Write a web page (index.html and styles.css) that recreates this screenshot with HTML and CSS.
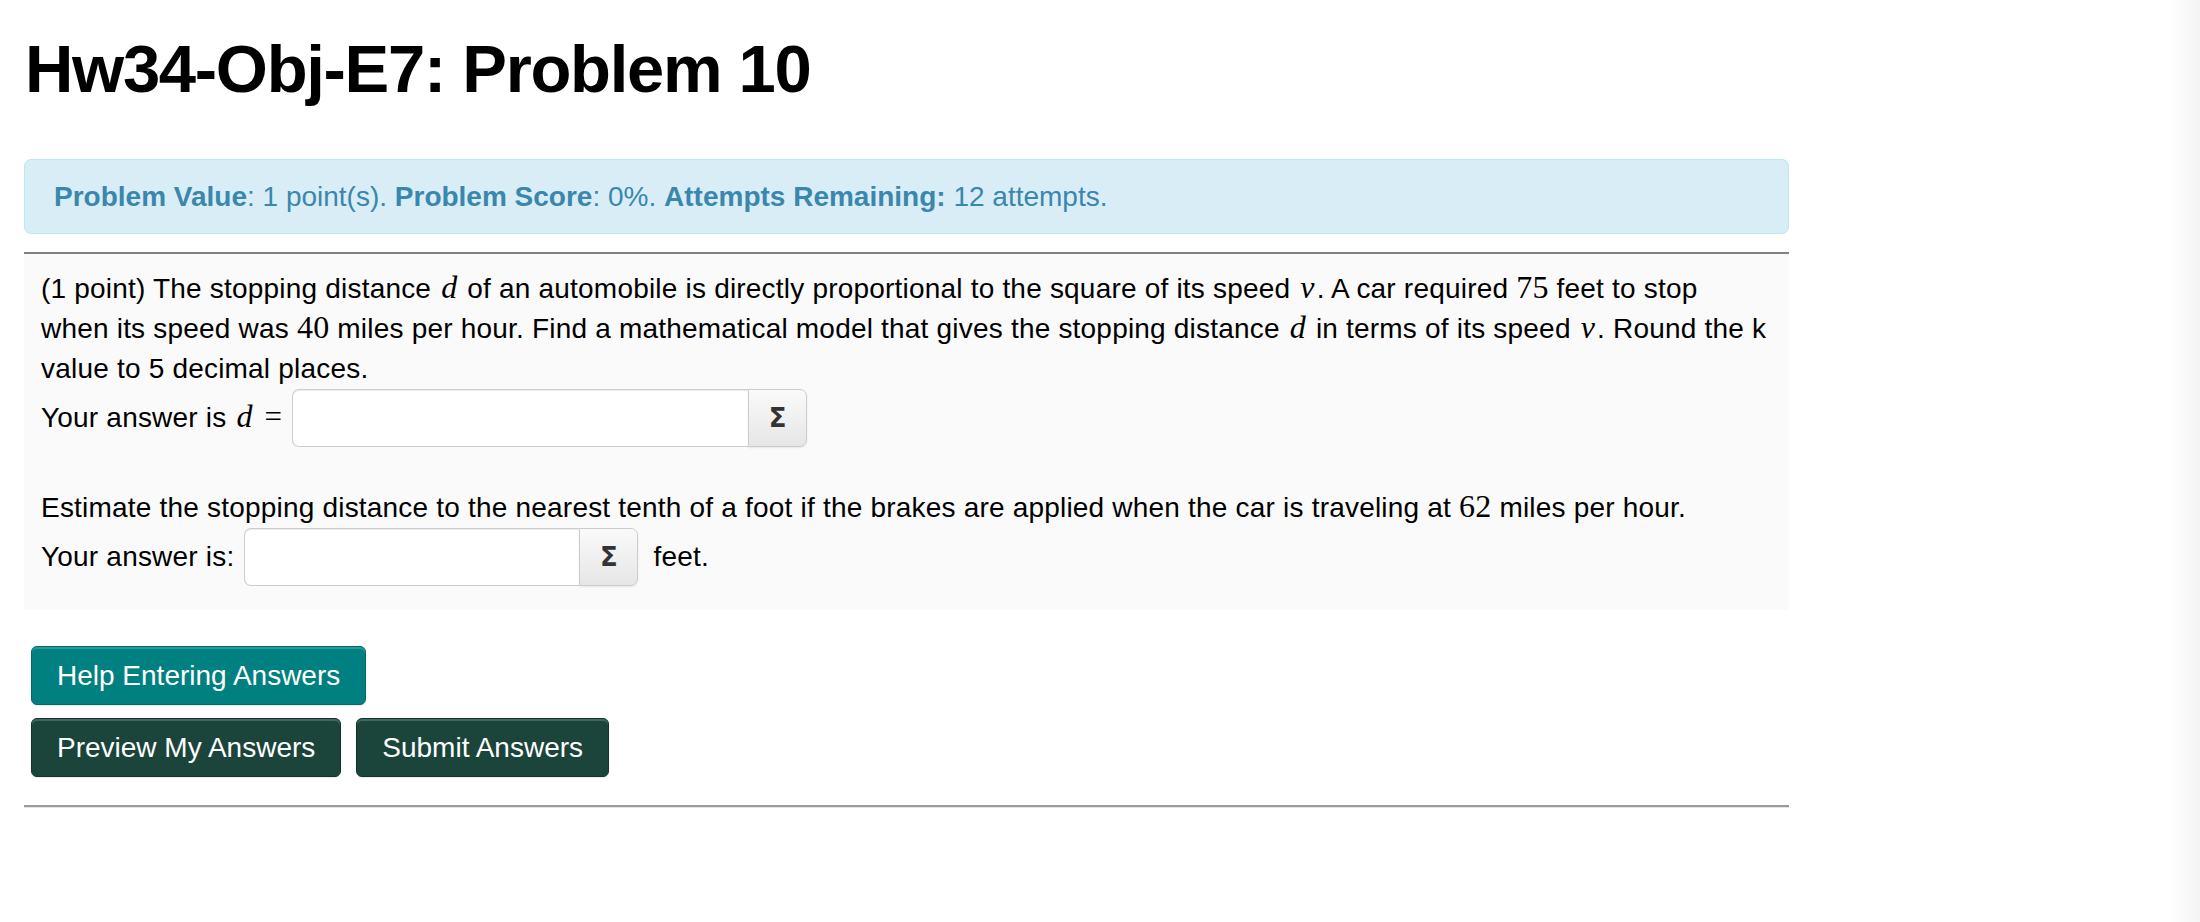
FILE: index.html
```html
<!DOCTYPE html>
<html lang="en">
<head>
<meta charset="utf-8">
<title>Hw34-Obj-E7: Problem 10</title>
<link rel="stylesheet" href="styles.css">
</head>
<body>
<div class="page">
  <main class="content">
    <h1 class="title">Hw34-Obj-E7: Problem 10</h1>
    <div class="alert"><b>Problem Value</b>: 1 point(s). <b>Problem Score</b>: 0%. <b>Attempts Remaining:</b> 12 attempts.</div>
    <div class="problem">
      <p class="text">(1 point) The stopping distance <i class="m">d</i> of an automobile is directly proportional to the square of its speed <i class="m">v</i>. A car required <span class="m num">75</span> feet to stop<br>when its speed was <span class="m num">40</span> miles per hour. Find a mathematical model that gives the stopping distance <i class="m">d</i> in terms of its speed <i class="m">v</i>. Round the k<br>value to 5 decimal places.</p>
      <div class="answer-row">
        <span class="label">Your answer is <i class="m">d</i> <span class="m eq">=</span></span>
        <span class="ans ans-1"><span class="field"></span><span class="sigma">Σ</span></span>
      </div>
      <p class="text p2">Estimate the stopping distance to the nearest tenth of a foot if the brakes are applied when the car is traveling at <span class="m num">62</span> miles per hour.</p>
      <div class="answer-row">
        <span class="label">Your answer is:</span>
        <span class="ans ans-2"><span class="field"></span><span class="sigma">Σ</span></span>
        <span class="unit">feet.</span>
      </div>
    </div>
    <div class="buttons">
      <div class="btn-row"><span class="btn btn-help">Help Entering Answers</span></div>
      <div class="btn-row"><span class="btn btn-dark">Preview My Answers</span><span class="btn btn-dark">Submit Answers</span></div>
    </div>
    <div class="rule-bottom"></div>
  </main>
  <div class="edge"></div>
</div>
</body>
</html>
```
FILE: styles.css
```css
html, body {
  margin: 0;
  padding: 0;
  background: #fff;
}
body {
  font-family: "Liberation Sans", Arial, Helvetica, sans-serif;
  font-size: 28px;
  line-height: 40px;
  color: #000;
}
.page {
  display: flex;
  min-height: 922px;
}
.content {
  margin-left: 24px;
  width: 1765px;
}
.edge {
  margin-left: auto;
  width: 30px;
  min-height: 922px;
  background: linear-gradient(to right, #ffffff, #f4f4f4);
}
.title {
  margin: 32px 0 0 1px;
  font-size: 67px;
  line-height: 73px;
  font-weight: bold;
  letter-spacing: -1.3px;
}
.alert {
  margin-top: 54px;
  border: 1px solid #bce8f1;
  border-radius: 7px;
  background: #d9edf7;
  color: #3a87ad;
  padding: 17px 29px 16px;
}
.alert b {
  font-weight: bold;
}
.problem {
  margin-top: 18px;
  border-top: 2px solid #808080;
  background: #fafafa;
  padding: 15px 17px 24px;
  letter-spacing: 0.2px;
}
.text {
  margin: 0;
  white-space: nowrap;
}
.m {
  font-family: "Liberation Serif", "Times New Roman", serif;
  line-height: 1;
}
i.m {
  font-style: italic;
  font-size: 32px;
  padding: 0 2px;
}
.num {
  font-size: 32px;
}
.eq {
  font-size: 31px;
  padding-left: 2px;
}
.answer-row {
  display: flex;
  align-items: center;
  height: 58px;
}
.label {
  white-space: nowrap;
}
.ans {
  display: flex;
  height: 58px;
  margin-left: 10px;
}
.ans-1 { width: 515px; }
.ans-2 { width: 394px; margin-left: 10px; }
.field {
  flex: 1;
  border: 1px solid #cccccc;
  border-right: none;
  border-radius: 7px 0 0 7px;
  background: #fff;
  box-shadow: inset 0 1px 1px rgba(0,0,0,0.075);
}
.sigma {
  width: 57px;
  display: flex;
  align-items: center;
  justify-content: center;
  border: 1px solid #cccccc;
  border-radius: 0 7px 7px 0;
  background: linear-gradient(to bottom, #fafafa, #e6e6e6);
  font-family: "DejaVu Sans", sans-serif;
  font-weight: bold;
  font-size: 26px;
  color: #333;
  box-shadow: 0 1px 2px rgba(0,0,0,0.08);
}
.unit {
  margin-left: 15px;
}
.p2 {
  margin-top: 41px;
}
.buttons {
  margin-top: 36px;
  padding-left: 7px;
  display: flex;
  flex-direction: column;
  gap: 13px;
}
.btn-row {
  display: flex;
  gap: 15px;
}
.btn {
  display: inline-flex;
  align-items: center;
  height: 57px;
  padding: 0 25px;
  border-radius: 6px;
  color: #fff;
  white-space: nowrap;
  box-shadow: inset 0 2px 0 rgba(255,255,255,0.18), 0 1px 2px rgba(0,0,0,0.1);
}
.btn-help {
  background: #008080;
  border: 1px solid #006a6a;
}
.btn-dark {
  background: #1b453b;
  border: 1px solid #12332b;
}
.rule-bottom {
  margin-top: 28px;
  border-top: 2px solid #9a9a9a;
  border-bottom: 1px solid #e4e4e4;
}
```
